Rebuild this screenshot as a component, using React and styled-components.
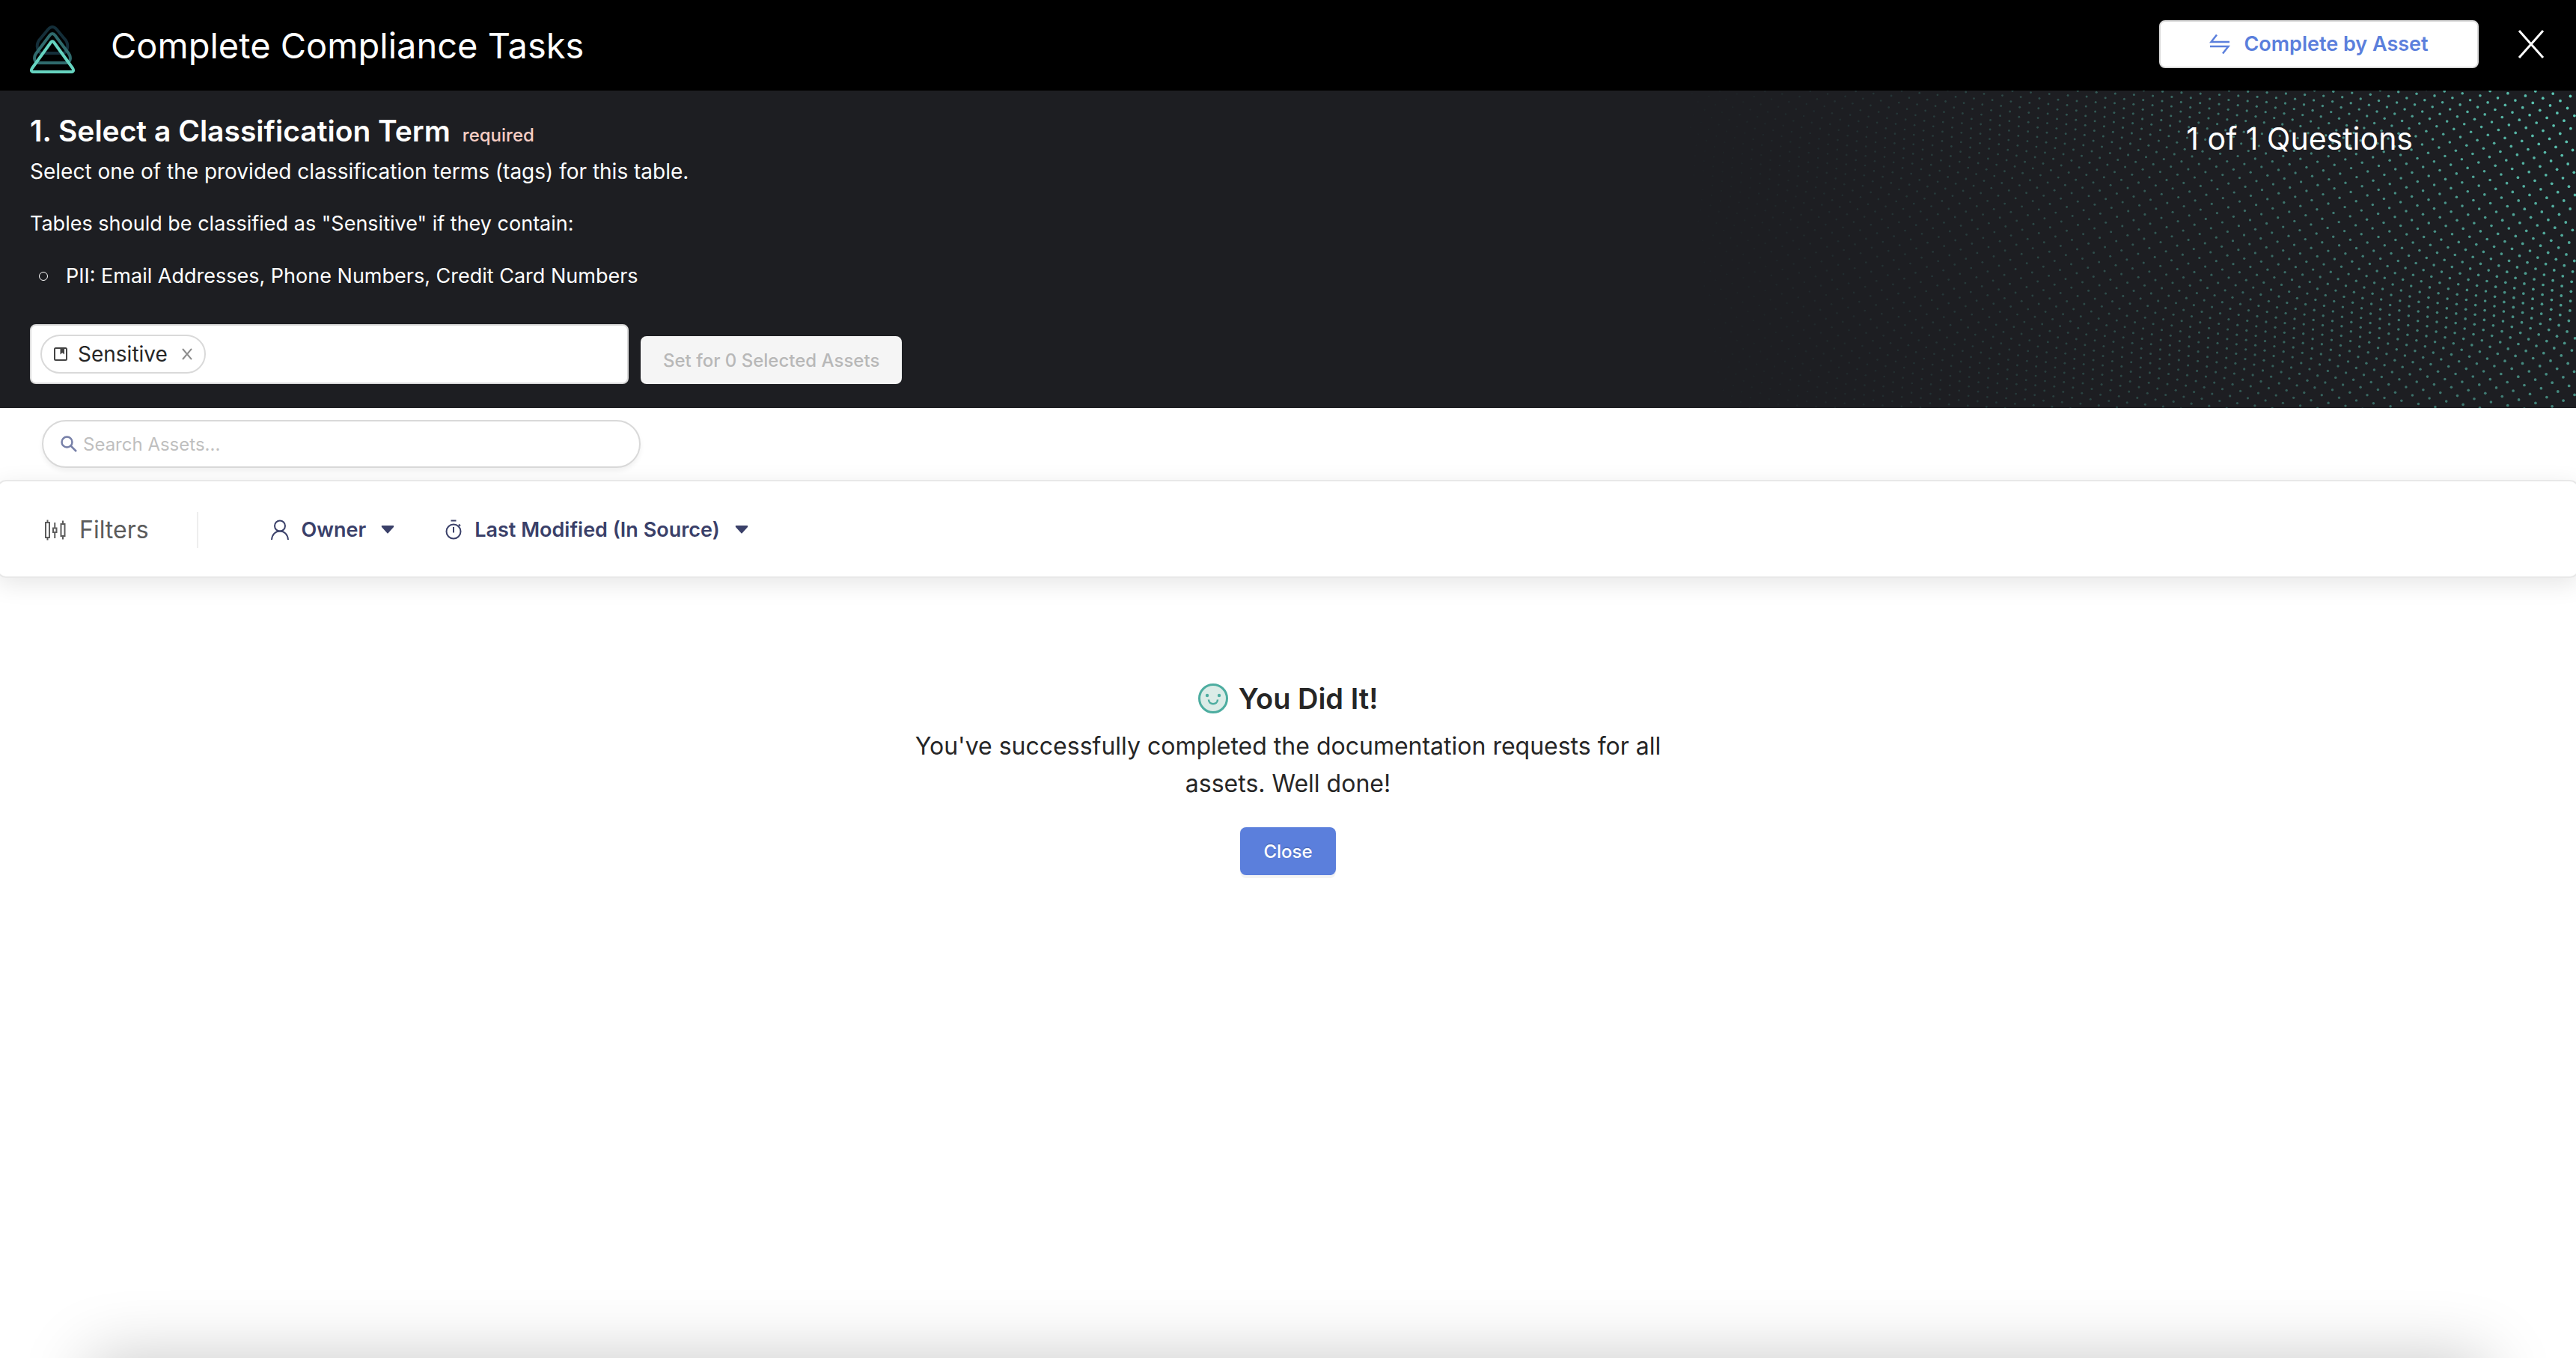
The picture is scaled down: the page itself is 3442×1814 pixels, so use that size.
import React from "react";
import styled, { createGlobalStyle } from "styled-components";

const GlobalStyle = createGlobalStyle`
  *, *::before, *::after { box-sizing: border-box; }
  body {
    margin: 0;
    background: #fff;
    color: #262626;
    font-family: Inter, "Open Sans", sans-serif;
  }
  button, input { font-family: inherit; }
  h1, h2, p, ul { margin: 0; padding: 0; }
`;

const Page = styled.div`
  position: relative;
  display: flex;
  flex-direction: column;
  min-height: 100vh;
  overflow: hidden;
`;

/* ---------- top bar ---------- */

const TopBar = styled.header`
  display: flex;
  align-items: center;
  justify-content: space-between;
  height: 121px;
  padding: 0 42px 0 40px;
  background: #000;
  color: #fff;
`;

const Brand = styled.div`
  display: flex;
  align-items: center;
  gap: 48px;
`;

const PageTitle = styled.h1`
  font-size: 47px;
  font-weight: 400;
  line-height: 62px;
`;

const TopActions = styled.div`
  display: flex;
  align-items: center;
  gap: 52px;
  padding-bottom: 4px;
`;

const Button = styled.button`
  display: inline-flex;
  align-items: center;
  justify-content: center;
  height: 64px;
  padding: 0 28px;
  border: 2px solid transparent;
  border-radius: 8px;
  font-size: 24px;
  font-weight: 500;
  cursor: pointer;
`;

const SwitchButton = styled(Button)`
  gap: 18px;
  width: 427px;
  border-color: #d9d9d9;
  background: #fff;
  color: #5b7fdc;
  font-size: 27px;
  font-weight: 600;
`;

const PrimaryButton = styled(Button)`
  min-width: 128px;
  background: #5b7fdc;
  color: #fff;
  text-shadow: 0 -2px 0 rgba(0, 0, 0, 0.12);
  box-shadow: 0 4px 0 rgba(0, 0, 0, 0.045);
`;

const BulkButton = styled(Button)`
  background: #f5f5f5;
  color: #b8b8b8;
  cursor: not-allowed;
`;

const IconButton = styled.button`
  display: inline-flex;
  padding: 0;
  border: 0;
  background: none;
  color: ${(p) => p.$color};
  cursor: pointer;
`;

/* ---------- question ---------- */

const Question = styled.section`
  position: relative;
  display: flex;
  align-items: flex-start;
  justify-content: space-between;
  padding: 24px 40px 32px;
  background: #1d1e22;
  color: #fff;
  overflow: hidden;
`;

const DotField = styled.svg`
  position: absolute;
  top: 0;
  right: 0;
  pointer-events: none;
`;

const QuestionBody = styled.div`
  position: relative;
  display: flex;
  flex-direction: column;
`;

const QuestionHead = styled.div`
  display: flex;
  align-items: baseline;
  gap: 16px;
  margin-bottom: 2px;
`;

const QuestionTitle = styled.h2`
  font-size: 39px;
  font-weight: 600;
  line-height: 60px;
`;

const Required = styled.span`
  color: #f7cdc4;
  font-size: 24px;
  font-weight: 500;
`;

const Description = styled.div`
  display: flex;
  flex-direction: column;
  gap: 26px;
  margin-bottom: 42px;
  font-size: 27px;
  line-height: 44px;
`;

const Lead = styled.p`
  font-size: 28px;
`;

const BulletList = styled.ul`
  list-style: none;
`;

const Bullet = styled.li`
  display: flex;
  align-items: center;
  gap: 24px;
  padding-left: 12px;

  &::before {
    content: "";
    width: 12px;
    height: 12px;
    border: 1px solid #fff;
    border-radius: 50%;
  }
`;

const AnswerRow = styled.div`
  display: flex;
  align-items: flex-end;
  gap: 16px;
`;

const TagField = styled.div`
  display: flex;
  align-items: center;
  gap: 8px;
  width: 800px;
  padding: 12px;
  border: 2px solid #d9d9d9;
  border-radius: 8px;
  background: #fff;
`;

const Tag = styled.span`
  display: inline-flex;
  align-items: center;
  height: 52px;
  padding: 0 15px 0 16px;
  border: 2px solid #d9d9d9;
  border-radius: 26px;
  color: #262626;
  font-size: 28px;
`;

const TagName = styled.span`
  padding: 0 18px 0 14px;
`;

const TextInput = styled.input`
  flex: 1;
  min-width: 0;
  padding: 0;
  border: 0;
  outline: 0;
  background: transparent;
  color: #262626;
  font-size: 24px;

  &::placeholder { color: #bfbfbf; opacity: 1; }
`;

const Progress = styled.p`
  position: relative;
  padding: 9px 178px 0 0;
  font-size: 41px;
  line-height: 62px;
`;

/* ---------- search and filters ---------- */

const SearchBar = styled.form`
  padding: 16px 56px;
`;

const SearchField = styled.label`
  display: flex;
  align-items: center;
  gap: 8px;
  width: 800px;
  height: 64px;
  padding: 0 23px;
  border: 2px solid #d9d9d9;
  border-radius: 32px;
  background: #fff;
  box-shadow: 0 4px 6px rgba(0, 0, 0, 0.06);
  color: #7780a8;
`;

const FilterBar = styled.div`
  display: flex;
  align-items: center;
  height: 131px;
  margin: 0 -4px;
  padding: 2px 60px 0;
  border: 2px solid #e8e8e8;
  border-radius: 12px;
  background: #fff;
  box-shadow: 0 8px 32px rgba(0, 0, 0, 0.1);
`;

const FilterLabel = styled.div`
  display: flex;
  align-items: center;
  gap: 18px;
  height: 48px;
  padding-right: 64px;
  border-right: 2px solid #eee;
  color: #5c5c5c;
  font-size: 32px;
`;

const FilterGroup = styled.div`
  display: flex;
  gap: 68px;
  padding-left: 97px;
`;

const FilterButton = styled.button`
  display: inline-flex;
  align-items: center;
  padding: 0;
  border: 0;
  background: none;
  color: #3a4069;
  font-size: 27px;
  font-weight: 600;
  line-height: 40px;
  cursor: pointer;
`;

const FilterName = styled.span`
  padding: 0 20px 0 17px;
`;

/* ---------- result ---------- */

const Result = styled.main`
  display: flex;
  flex-direction: column;
  align-items: center;
  padding-top: 130px;
`;

const ResultTitle = styled.h2`
  display: flex;
  align-items: center;
  gap: 14px;
  margin-bottom: 8px;
  font-size: 38px;
  font-weight: 600;
  line-height: 62px;
`;

const ResultText = styled.p`
  max-width: 1040px;
  margin-bottom: 33px;
  font-size: 32px;
  line-height: 50px;
  text-align: center;
`;

const BottomShade = styled.div`
  position: absolute;
  top: 100%;
  left: 120px;
  right: 120px;
  height: 200px;
  box-shadow: 0 0 90px rgba(0, 0, 0, 0.22);
`;

/* ---------- drawings ---------- */

function Logo() {
  return (
    <svg width="60" height="74" viewBox="0 0 60 74" fill="none" strokeWidth="4" strokeLinejoin="round" aria-hidden="true">
      <path stroke="#142e39" d="M35.5 15 L48 30 C52.500 37 50 47 43 47 H17 C10 47 7.500 37 12 30 L24.500 15 Q30 9 35.500 15Z" />
      <path stroke="#2f6a6c" d="M33.800 23.500 L51.500 47 C56 53.500 54 60 47.500 60 H12.500 C6 60 4 53.500 8.500 47 L26.200 23.500 Q30 18.500 33.800 23.500Z" />
      <path stroke="#66d4c0" d="M32 32.500 L57 67 Q60 72 54.500 72 H5.500 Q0 72 3 67 L28 32.500 Q30 30 32 32.500Z" />
    </svg>
  );
}

function SwapIcon() {
  return (
    <svg width="28" height="28" viewBox="0 0 28 28" fill="none" stroke="currentColor" strokeWidth="2.500" aria-hidden="true">
      <path d="M27 11H2.500L10 1.500" />
      <path d="M1 17H25.500L18 26.500" />
    </svg>
  );
}

function CrossIcon({ width, height, stroke }) {
  return (
    <svg width={width} height={height} viewBox={`0 0 ${width} ${height}`} fill="none" stroke="currentColor" strokeWidth={stroke} aria-hidden="true">
      <path d={`M2 1L${width - 2} ${height - 1}M${width - 2} 1L2 ${height - 1}`} />
    </svg>
  );
}

function TermIcon() {
  return (
    <svg width="18" height="18" viewBox="0 0 18 18" aria-hidden="true">
      <rect x="1" y="1" width="16" height="16" rx="1.500" fill="none" stroke="#434343" strokeWidth="2" />
      <path d="M8.500 1H14V9.500L11.250 7.300L8.500 9.500Z" fill="#434343" />
    </svg>
  );
}

function SearchIcon() {
  return (
    <svg width="22" height="22" viewBox="0 0 22 22" fill="none" stroke="currentColor" strokeWidth="2.500" aria-hidden="true">
      <circle cx="8.500" cy="8.500" r="7" />
      <path d="M13.500 13.500L21 21" />
    </svg>
  );
}

function SlidersIcon() {
  return (
    <svg width="30" height="28" viewBox="0 0 30 28" fill="none" stroke="currentColor" strokeWidth="2" aria-hidden="true">
      <path d="M3 4H8V24H3ZM5.500 0.500V4M5.500 24V27.500" />
      <path d="M13 11.500H17.500V17H13ZM15.250 4V11.500M15.250 17V25" />
      <path d="M23.500 6H28.500V22H23.500ZM26 1.500V6M26 22V26.500" />
    </svg>
  );
}

function PersonIcon() {
  return (
    <svg width="24" height="27" viewBox="0 0 24 27" fill="none" stroke="currentColor" strokeWidth="2" aria-hidden="true">
      <circle cx="12" cy="8.500" r="7" />
      <path d="M1 27C1.500 20 6 15.500 12 15.500S22.500 20 23 27" />
    </svg>
  );
}

function StopwatchIcon() {
  return (
    <svg width="22" height="27" viewBox="0 0 22 27" fill="none" stroke="currentColor" strokeWidth="2" aria-hidden="true">
      <circle cx="11" cy="16" r="9.500" />
      <path d="M7.500 1.500H14.500M11 10V17.500M18 6.500L20 8.500" />
    </svg>
  );
}

function Caret() {
  return (
    <svg width="18" height="11" viewBox="0 0 18 11" fill="currentColor" aria-hidden="true">
      <path d="M1.500 0H16.500Q18 0.500 17 2L9.800 10Q9 11 8.200 10L1 2Q0 0.500 1.500 0Z" />
    </svg>
  );
}

function SmileIcon() {
  return (
    <svg width="40" height="40" viewBox="0 0 40 40" aria-hidden="true">
      <circle cx="20" cy="20" r="18.500" fill="#dbece7" stroke="#4dada0" strokeWidth="3" />
      <circle cx="12" cy="16" r="2.200" fill="#4dada0" />
      <circle cx="28" cy="16" r="2.200" fill="#4dada0" />
      <path d="M14 21.500C14 29 26 29 26 21.500" fill="none" stroke="#4dada0" strokeWidth="2.500" />
    </svg>
  );
}

const FIELD_WIDTH = 1300;
const FIELD_HEIGHT = 424;

// A slanted grid of dots, bent by a wave that runs along its second axis
// and calms down towards the top right corner.
function buildDots() {
  const dots = [];
  for (let i = -90; i <= 60; i += 1) {
    for (let j = -90; j <= 90; j += 1) {
      const baseX = 969 + 14 * i + 9.7 * j;
      const baseY = 151 - 6.7 * i + 9.7 * j;
      const right = Math.min(1, Math.max(0, (baseX / FIELD_WIDTH - 0.75) * 4));
      const top = Math.min(1, Math.max(0, 1 - baseY / 300));
      const wave = 13 * (1 - 0.6 * right * top) * Math.sin((2 * Math.PI * (j - 0.4 * i)) / 30);
      const x = baseX - wave;
      const y = baseY + wave;
      if (x < 0 || x > FIELD_WIDTH || y < -2 || y > FIELD_HEIGHT + 2) continue;
      const across = x / FIELD_WIDTH;
      const opacity = Math.pow(across, 1.6) * (1 - (0.4 * y) / FIELD_HEIGHT);
      if (opacity < 0.02) continue;
      dots.push({ x, y, r: 1.1 + across * 0.8, opacity });
    }
  }
  return dots;
}

const dots = buildDots();

const filters = [
  { name: "Owner", Icon: PersonIcon },
  { name: "Last Modified (In Source)", Icon: StopwatchIcon },
];

export default function App() {
  return (
    <Page>
      <GlobalStyle />
      <TopBar>
        <Brand>
          <Logo />
          <PageTitle>Complete Compliance Tasks</PageTitle>
        </Brand>
        <TopActions>
          <SwitchButton type="button">
            <SwapIcon />
            Complete by Asset
          </SwitchButton>
          <IconButton type="button" $color="#fff" aria-label="Close">
            <CrossIcon width={36} height={38} stroke={3} />
          </IconButton>
        </TopActions>
      </TopBar>

      <Question>
        <DotField width={FIELD_WIDTH} height={FIELD_HEIGHT} fill="#5fd0bc" aria-hidden="true">
          {dots.map((d, n) => (
            <circle key={n} cx={d.x.toFixed(1)} cy={d.y.toFixed(1)} r={d.r.toFixed(2)} opacity={d.opacity.toFixed(2)} />
          ))}
        </DotField>
        <QuestionBody>
          <QuestionHead>
            <QuestionTitle>1. Select a Classification Term</QuestionTitle>
            <Required>required</Required>
          </QuestionHead>
          <Description>
            <Lead>Select one of the provided classification terms (tags) for this table.</Lead>
            <p>Tables should be classified as "Sensitive" if they contain:</p>
            <BulletList>
              <Bullet>PII: Email Addresses, Phone Numbers, Credit Card Numbers</Bullet>
            </BulletList>
          </Description>
          <AnswerRow>
            <TagField>
              <Tag>
                <TermIcon />
                <TagName>Sensitive</TagName>
                <IconButton type="button" $color="#8c8c8c" aria-label="Remove Sensitive">
                  <CrossIcon width={16} height={16} stroke={2} />
                </IconButton>
              </Tag>
              <TextInput type="text" aria-label="Classification term" />
            </TagField>
            <BulkButton type="button" disabled>Set for 0 Selected Assets</BulkButton>
          </AnswerRow>
        </QuestionBody>
        <Progress>1 of 1 Questions</Progress>
      </Question>

      <SearchBar>
        <SearchField>
          <SearchIcon />
          <TextInput type="text" placeholder="Search Assets..." aria-label="Search Assets" />
        </SearchField>
      </SearchBar>

      <FilterBar>
        <FilterLabel>
          <SlidersIcon />
          Filters
        </FilterLabel>
        <FilterGroup>
          {filters.map(({ name, Icon }) => (
            <FilterButton type="button" key={name}>
              <Icon />
              <FilterName>{name}</FilterName>
              <Caret />
            </FilterButton>
          ))}
        </FilterGroup>
      </FilterBar>

      <Result>
        <ResultTitle>
          <SmileIcon />
          You Did It!
        </ResultTitle>
        <ResultText>
          You've successfully completed the documentation requests for all assets. Well done!
        </ResultText>
        <PrimaryButton type="button">Close</PrimaryButton>
      </Result>

      <BottomShade />
    </Page>
  );
}
